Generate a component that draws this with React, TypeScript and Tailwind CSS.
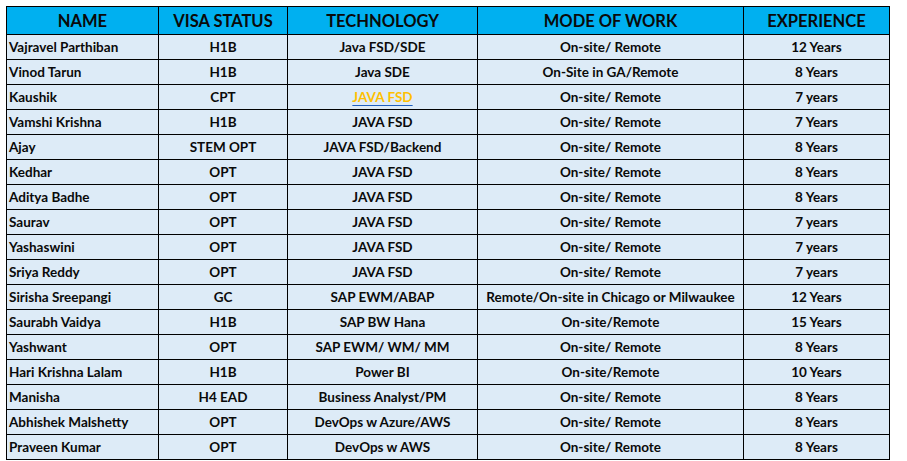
import React from "react";

const rows: [string, string, string, string, string][] = [
  ["Vajravel Parthiban", "H1B", "Java FSD/SDE", "On-site/ Remote", "12 Years"],
  ["Vinod Tarun", "H1B", "Java SDE", "On-Site in GA/Remote", "8 Years"],
  ["Kaushik", "CPT", "JAVA FSD", "On-site/ Remote", "7 years"],
  ["Vamshi Krishna", "H1B", "JAVA FSD", "On-site/ Remote", "7 Years"],
  ["Ajay", "STEM OPT", "JAVA FSD/Backend", "On-site/ Remote", "8 Years"],
  ["Kedhar", "OPT", "JAVA FSD", "On-site/ Remote", "8 Years"],
  ["Aditya Badhe", "OPT", "JAVA FSD", "On-site/ Remote", "8 Years"],
  ["Saurav", "OPT", "JAVA FSD", "On-site/ Remote", "7 years"],
  ["Yashaswini", "OPT", "JAVA FSD", "On-site/ Remote", "7 years"],
  ["Sriya Reddy", "OPT", "JAVA FSD", "On-site/ Remote", "7 years"],
  ["Sirisha Sreepangi", "GC", "SAP EWM/ABAP", "Remote/On-site in Chicago or Milwaukee", "12 Years"],
  ["Saurabh Vaidya", "H1B", "SAP BW Hana", "On-site/Remote", "15 Years"],
  ["Yashwant", "OPT", "SAP EWM/ WM/ MM", "On-site/ Remote", "8 Years"],
  ["Hari Krishna Lalam", "H1B", "Power BI", "On-site/Remote", "10 Years"],
  ["Manisha", "H4 EAD", "Business Analyst/PM", "On-site/ Remote", "8 Years"],
  ["Abhishek Malshetty", "OPT", "DevOps w Azure/AWS", "On-site/ Remote", "8 Years"],
  ["Praveen Kumar", "OPT", "DevOps w AWS", "On-site/ Remote", "8 Years"],
];

const headers = ["NAME", "VISA STATUS", "TECHNOLOGY", "MODE OF WORK", "EXPERIENCE"];

export default function App() {
  return (
    <div className="w-[907px] h-[461px] overflow-hidden bg-white" style={{ fontFamily: "Lato, 'Liberation Sans', sans-serif" }}>
      <div className="ml-[6px] mt-[6px] inline-grid grid-cols-[152px_129px_190px_266px_146px] border-l border-t border-black text-[#0a0a0a]">
        {headers.map((h) => (
          <div key={h} className="h-[28px] pt-[2px] bg-[#00B0F0] border-r border-b border-black flex items-center justify-center font-bold text-[16.5px] leading-none">
            {h}
          </div>
        ))}
        {rows.map((r, i) => (
          <React.Fragment key={i}>
            <div className="h-[25px] pt-[2px] bg-[#DDEBF7] border-r border-b border-black flex items-center pl-[2px] font-bold text-[13.5px] leading-none whitespace-nowrap">
              {r[0]}
            </div>
            <div className="h-[25px] pt-[2px] bg-[#DDEBF7] border-r border-b border-black flex items-center justify-center font-bold text-[13.5px] leading-none whitespace-nowrap">
              {r[1]}
            </div>
            <div className="h-[25px] pt-[2px] bg-[#DDEBF7] border-r border-b border-black flex items-center justify-center font-bold text-[13.5px] leading-none whitespace-nowrap">
              {i === 2 ? (
                <span className="text-[#FFC000] underline decoration-[#1F5FBF] underline-offset-[3px]">{r[2]}</span>
              ) : (
                r[2]
              )}
            </div>
            <div className="h-[25px] pt-[2px] bg-[#DDEBF7] border-r border-b border-black flex items-center justify-center font-bold text-[13.5px] leading-none whitespace-nowrap">
              {r[3]}
            </div>
            <div className="h-[25px] pt-[2px] bg-[#DDEBF7] border-r border-b border-black flex items-center justify-center font-bold text-[13.5px] leading-none whitespace-nowrap">
              {r[4]}
            </div>
          </React.Fragment>
        ))}
      </div>
    </div>
  );
}
